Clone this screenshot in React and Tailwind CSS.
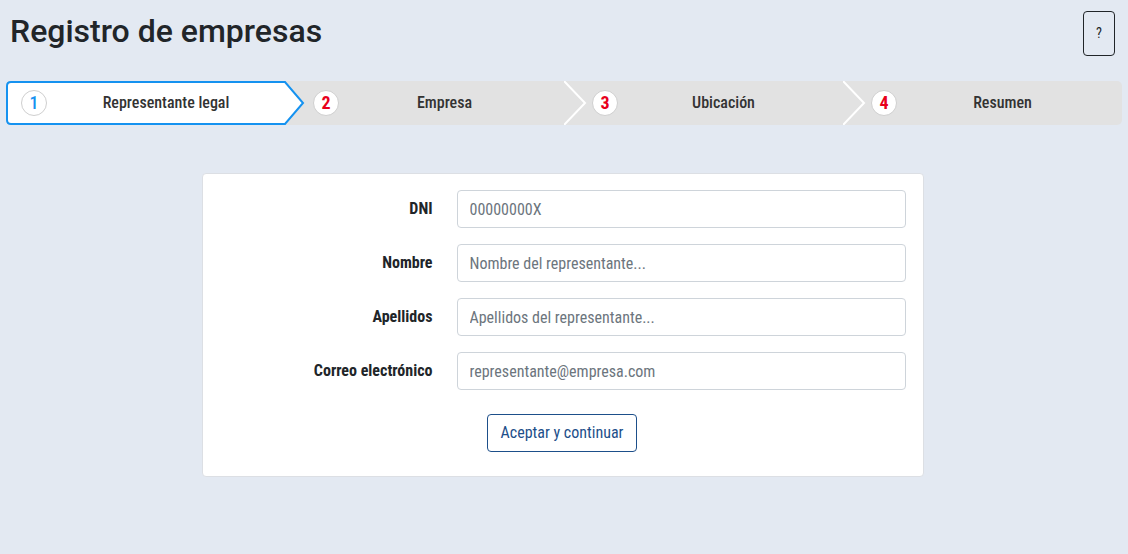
import {useState} from "react";

const steps = [
    {n: 1, label: "Representante legal"},
    {n: 2, label: "Empresa"},
    {n: 3, label: "Ubicación"},
    {n: 4, label: "Resumen"},
];

const fields = [
    {id: "dni", label: "DNI", placeholder: "00000000X"},
    {id: "nombre", label: "Nombre", placeholder: "Nombre del representante..."},
    {id: "apellidos", label: "Apellidos", placeholder: "Apellidos del representante..."},
    {id: "correo", label: "Correo electrónico", placeholder: "representante@empresa.com"},
];

function Step({step, active}) {
    return (
        <div className={"relative flex min-w-0 items-center h-full " + (step.n === 1 ? "pl-[15px]" : "pl-[28px] pr-[14px]")}>
            {active && (
                <svg className="absolute left-0 top-0 z-0" width="300" height="44" viewBox="0 0 300 44">
                    <path d="M5 1 H279 L297 22 L279 43 H5 Q1 43 1 39 V5 Q1 1 5 1 Z" fill="#ffffff" stroke="#1592f0" strokeWidth="2"/>
                </svg>
            )}
            {step.n > 2 && (
                <svg className="absolute left-0 top-0" width="24" height="44" viewBox="0 0 24 44">
                    <polyline points="0,0 21,22 0,44" fill="none" stroke="#ffffff" strokeWidth="2"/>
                </svg>
            )}
            <div className="relative z-10 flex h-[26px] w-[26px] shrink-0 items-center justify-center rounded-full border border-[#cfcfcf] bg-white">
                <span className={"text-[18px] leading-none " + (active ? "text-[#1592f0] font-medium" : "text-[#e8001c] font-bold")}>
                    {step.n}
                </span>
            </div>
            <div className="relative z-10 flex-1 text-center text-[16px] font-medium text-[#333333]">
                {step.label}
            </div>
        </div>
    );
}

export default function App() {
    const [values, setValues] = useState({});

    const submitHandle = (e) => {
        e.preventDefault();
    };

    return (
        <div className="min-h-screen bg-[#e3e9f2] px-[6px] text-[#212529]" style={{fontFamily: "'Roboto Condensed', Roboto, sans-serif"}}>
            <div className="flex items-start justify-between pl-[4px] pr-[7px] pt-[11px]">
                <h1 className="mt-[2px] text-[32px] font-medium leading-[36px]" style={{fontFamily: "Roboto, sans-serif"}}>
                    Registro de empresas
                </h1>
                <button type="button" className="h-[45px] w-[32px] rounded-[4px] border border-[#212529] text-[14px] text-[#212529]">
                    ?
                </button>
            </div>

            <div className="mt-[25px] grid h-[44px] grid-cols-4 rounded-[5px] bg-[#e2e2e2]">
                {steps.map((step) => (
                    <Step key={step.n} step={step} active={step.n === 1}/>
                ))}
            </div>

            <div className="pr-[3px]">
                <form onSubmit={submitHandle} className="mx-auto mt-[48px] w-[722px] rounded-[4px] border border-[#dcdfe4] bg-white pl-[16px] pr-[17px] pt-[16px] pb-[24px]">
                    <div className="flex flex-col gap-[16px]">
                        {fields.map((field) => (
                            <div key={field.id} className="flex items-center gap-[24px]">
                                <label htmlFor={field.id} className="w-[214px] text-right text-[16px] font-bold">
                                    {field.label}
                                </label>
                                <input
                                    id={field.id}
                                    type="text"
                                    value={values[field.id] || ""}
                                    onChange={({target}) => setValues({...values, [field.id]: target.value})}
                                    placeholder={field.placeholder}
                                    className="h-[38px] flex-1 rounded-[4px] border border-[#ced4da] px-[12px] text-[16px] text-[#212529] placeholder:text-[#6c757d] outline-none"
                                />
                            </div>
                        ))}
                    </div>
                    <div className="mt-[24px] flex justify-center">
                        <button type="submit" className="h-[38px] rounded-[4px] border border-[#1d4f8a] px-[13px] text-[16px] text-[#1d4f8a]">
                            Aceptar y continuar
                        </button>
                    </div>
                </form>
            </div>
        </div>
    );
}
